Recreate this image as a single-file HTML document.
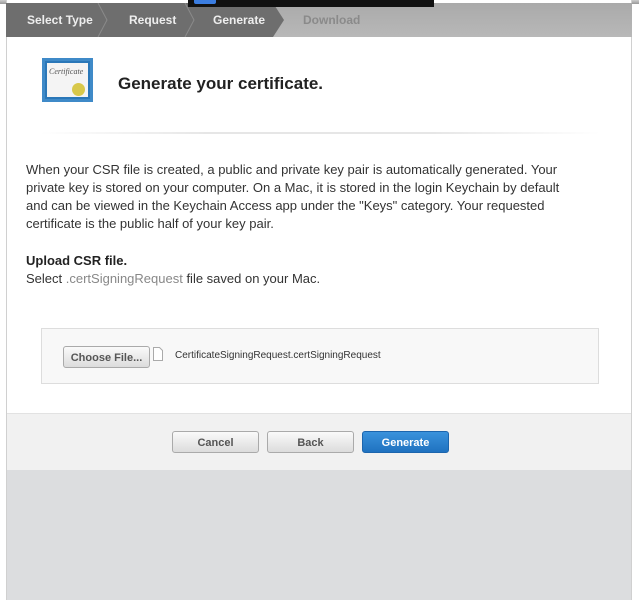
<!DOCTYPE html>
<html><head><style>
body{margin:0;width:639px;height:607px;background:#fff;position:relative;overflow:hidden;font-family:"Liberation Sans",sans-serif}
.abs{position:absolute}
.panel{left:6px;top:0;width:626px;height:600px;border:1px solid #d0d0d0;border-top:none;box-sizing:border-box;background:#fff}
.tabbar{left:6px;top:3px;width:626px;height:34px;background:linear-gradient(#aaa,#b8b8b8)}
.tab{position:absolute;top:0;height:34px;color:#eee;font-weight:bold;font-size:12px;line-height:34px}
p{margin:0}
.btn{position:absolute;height:22px;border:1px solid #aaa;border-radius:3px;background:linear-gradient(#fafafa,#dcdcdc);font-size:11px;font-weight:bold;color:#555;text-align:center;line-height:22px;box-sizing:border-box}
</style></head><body>
<div class="abs" style="left:0;top:0;width:639px;height:4px;background:linear-gradient(#ccc,#999)"></div>
<div class="abs panel"></div>
<div class="abs tabbar">
 <svg width="626" height="34" style="position:absolute;left:0;top:0">
  <polygon points="0,0 267,0 278,17 267,34 0,34" fill="#6e6e6e"/>
  <polyline points="92,0 101,17 92,34" fill="none" stroke="#8a8a8a"/>
  <polyline points="179,0 188,17 179,34" fill="none" stroke="#8a8a8a"/>
 </svg>
 <div class="tab" style="left:21px">Select Type</div>
 <div class="tab" style="left:123px">Request</div>
 <div class="tab" style="left:207px">Generate</div>
 <div class="tab" style="left:297px;color:#8a8a8a">Download</div>
</div>
<div class="abs" style="left:188px;top:0;width:246px;height:7px;background:#111"></div>
<div class="abs" style="left:194px;top:0;width:22px;height:4px;background:#3b7de0;border-radius:0 0 2px 2px"></div>
<div class="abs" style="left:42px;top:58px;width:51px;height:44px;background:#2a77b8;box-sizing:border-box;border:3px solid #3f8ac8">
 <div style="position:absolute;left:2px;top:2px;right:2px;bottom:2px;background:#f4f4f4"></div>
 <div style="position:absolute;left:4px;top:6px;font:italic 8px 'Liberation Serif',serif;color:#555">Certificate</div>
 <div style="position:absolute;left:27px;top:22px;width:13px;height:13px;border-radius:50%;background:#d8c84a"></div>
</div>
<div class="abs" style="left:118px;top:74px;font-size:17px;font-weight:bold;color:#222">Generate your certificate.</div>
<div class="abs" style="left:40px;top:132px;width:560px;height:2px;background:linear-gradient(90deg,#fff,#e6e6e6 30%,#e6e6e6 70%,#fff)"></div>
<div class="abs" style="left:26px;top:161px;width:556px;font-size:13px;line-height:18px;color:#333">When your CSR file is created, a public and private key pair is automatically generated. Your private key is stored on your computer. On a Mac, it is stored in the login Keychain by default and can be viewed in the Keychain Access app under the "Keys" category. Your requested certificate is the public half of your key pair.</div>
<div class="abs" style="left:26px;top:253px;font-size:13px;font-weight:bold;color:#222">Upload CSR file.</div>
<div class="abs" style="left:26px;top:271px;font-size:13px;color:#333">Select <span style="color:#888">.certSigningRequest</span> file saved on your Mac.</div>
<div class="abs" style="left:41px;top:328px;width:558px;height:56px;background:#f8f8f8;border:1px solid #ddd;box-sizing:border-box"></div>
<div class="btn" style="left:63px;top:346px;width:87px">Choose File...</div>
<svg class="abs" style="left:153px;top:347px" width="10" height="14"><path d="M.5 .5H6.5L9.5 3.5V13.5H.5Z" fill="#fff" stroke="#aaa"/></svg>
<div class="abs" style="left:175px;top:350px;font-size:10px;color:#333">CertificateSigningRequest.certSigningRequest</div>
<div class="abs" style="left:7px;top:413px;width:624px;height:57px;background:#f1f1f1;border-top:1px solid #e2e2e2"></div>
<div class="abs" style="left:7px;top:470px;width:624px;height:130px;background:#dcdddf"></div>
<div class="btn" style="left:172px;top:431px;width:87px">Cancel</div>
<div class="btn" style="left:267px;top:431px;width:87px">Back</div>
<div class="btn" style="left:362px;top:431px;width:87px;background:linear-gradient(#3a92dc,#1f72c0);border-color:#1c65ad;color:#fff">Generate</div>
</body></html>
